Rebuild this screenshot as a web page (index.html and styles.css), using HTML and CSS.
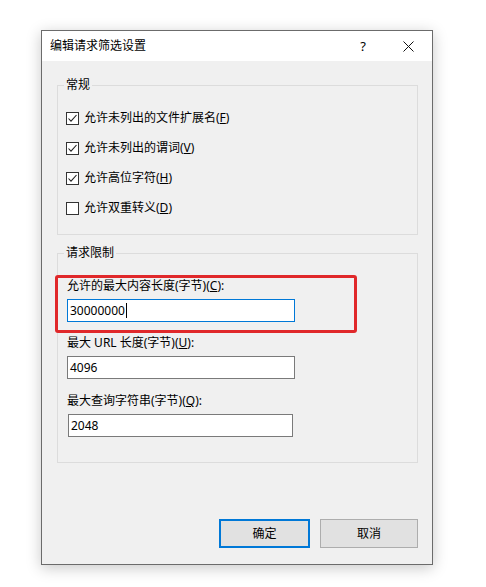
FILE: index.html
```html
<!DOCTYPE html>
<html lang="zh-CN">
<head>
<meta charset="utf-8">
<title>编辑请求筛选设置</title>
<link rel="stylesheet" href="styles.css">
</head>
<body>
<div class="window">
  <div class="titlebar">
    <span class="title">编辑请求筛选设置</span>
    <span class="help">?</span>
    <span class="close">
      <svg width="11" height="11" viewBox="0 0 11 11"><path d="M0.5 0.5 L10.5 10.5 M10.5 0.5 L0.5 10.5" stroke="#111" stroke-width="1" fill="none"/></svg>
    </span>
  </div>
  <div class="content">
    <fieldset class="group group-general">
      <legend class="legend">常规</legend>
      <div class="checks">
        <div class="check-row"><span class="box checked"><svg width="11" height="11" viewBox="0 0 11 11"><path d="M1.5 5.5 L4 8.2 L9.5 2" stroke="#222" stroke-width="1.1" fill="none"/></svg></span><span>允许未列出的文件扩展名(<u>F</u>)</span></div>
        <div class="check-row"><span class="box checked"><svg width="11" height="11" viewBox="0 0 11 11"><path d="M1.5 5.5 L4 8.2 L9.5 2" stroke="#222" stroke-width="1.1" fill="none"/></svg></span><span>允许未列出的谓词(<u>V</u>)</span></div>
        <div class="check-row"><span class="box checked"><svg width="11" height="11" viewBox="0 0 11 11"><path d="M1.5 5.5 L4 8.2 L9.5 2" stroke="#222" stroke-width="1.1" fill="none"/></svg></span><span>允许高位字符(<u>H</u>)</span></div>
        <div class="check-row"><span class="box"></span><span>允许双重转义(<u>D</u>)</span></div>
      </div>
    </fieldset>
    <fieldset class="group group-limits">
      <legend class="legend">请求限制</legend>
      <div class="fields">
        <div class="field">
          <div class="label">允许的最大内容长度(字节)(<u>C</u>):</div>
          <div class="textbox focused">30000000<span class="caret"></span></div>
        </div>
        <div class="field">
          <div class="label">最大 URL 长度(字节)(<u>U</u>):</div>
          <div class="textbox">4096</div>
        </div>
        <div class="field field-last">
          <div class="label">最大查询字符串(字节)(<u>Q</u>):</div>
          <div class="textbox narrow">2048</div>
        </div>
      </div>
    </fieldset>
    <div class="buttons">
      <div class="btn btn-default">确定</div>
      <div class="btn btn-cancel">取消</div>
    </div>
  </div>
  <div class="highlight"></div>
</div>
</body>
</html>
```
FILE: styles.css
```css
html, body {
  margin: 0;
  padding: 0;
  background: #ffffff;
}
body {
  font-family: "Segoe UI", "Noto Sans", "Noto Sans CJK SC", sans-serif;
  font-size: 12px;
  color: #000;
  padding: 30px 0 0 41px;
  height: 587px;
  box-sizing: border-box;
}
.window {
  position: relative;
  width: 392px;
  height: 535px;
  box-sizing: border-box;
  border: 1px solid #6b6b6b;
  background: #f0f0f0;
  box-shadow: 0 3px 14px rgba(0, 0, 0, 0.22);
  display: flex;
  flex-direction: column;
}
.titlebar {
  height: 30px;
  background: #ffffff;
  display: flex;
  align-items: center;
  padding-left: 8px;
  flex: none;
}
.title {
  flex: 1;
  line-height: 16px;
}
.help {
  width: 12px;
  text-align: center;
  margin-right: 34px;
  font-size: 13px;
  line-height: 16px;
}
.close {
  display: flex;
  margin-right: 18px;
}
.content {
  flex: 1;
  display: flex;
  flex-direction: column;
  padding: 0 14px 16px 15px;
}
.group {
  margin: 0;
  padding: 0;
  border: 1px solid #dcdcdc;
  min-inline-size: 0;
}
.group-general {
  margin-top: 16px;
}
.group-limits {
  margin-top: 10px;
}
.legend {
  padding: 0 2px;
  margin-left: 6px;
  line-height: 16px;
}
.checks {
  padding: 10px 0 11px 8px;
  display: flex;
  flex-direction: column;
}
.check-row {
  height: 30px;
  display: flex;
  align-items: center;
  gap: 5px;
  line-height: 16px;
}
.box {
  width: 13px;
  height: 13px;
  box-sizing: border-box;
  border: 1px solid #333;
  background: #fff;
  display: flex;
  align-items: center;
  justify-content: center;
}
.fields {
  padding: 16px 0 25px 9px;
  display: flex;
  flex-direction: column;
  gap: 12px;
}
.field {
  display: flex;
  flex-direction: column;
  gap: 5px;
}
.field-last {
  margin-top: 1px;
}
.label {
  line-height: 17px;
}
.textbox {
  width: 228px;
  height: 23px;
  box-sizing: border-box;
  border: 1px solid #7a7a7a;
  background: #fff;
  padding-left: 2px;
  line-height: 21px;
  display: flex;
  align-items: center;
}
.textbox.focused {
  border-color: #0078d7;
}
.textbox.narrow {
  width: 225px;
  margin-left: 1px;
}
.caret {
  width: 1px;
  height: 15px;
  background: #000;
  margin-left: 1px;
}
.buttons {
  margin-top: auto;
  display: flex;
  justify-content: flex-end;
  gap: 10px;
}
.btn {
  height: 29px;
  box-sizing: border-box;
  background: #e1e1e1;
  display: flex;
  align-items: center;
  justify-content: center;
  line-height: 16px;
}
.btn-default {
  width: 91px;
  border: 2px solid #0078d7;
}
.btn-cancel {
  width: 98px;
  border: 1px solid #adadad;
}
.highlight {
  position: absolute;
  left: 13px;
  top: 244px;
  width: 302px;
  height: 58px;
  box-sizing: border-box;
  border: 3px solid #e0282a;
  border-radius: 3px;
  pointer-events: none;
}
```
